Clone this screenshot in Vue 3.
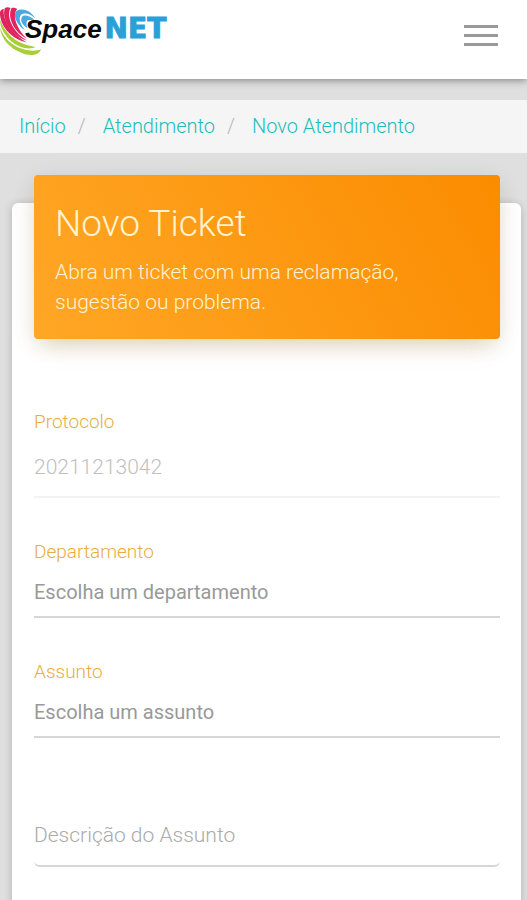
<template>
  <div class="page">
    <header class="navbar">
      <a href="#" class="logo" aria-label="SpaceNET">
        <svg class="swirl" viewBox="0 0 46 52" aria-hidden="true">
          <g fill="#a8cf38">
            <path d="M0 21C4 33 13 41 25 44C32 46 38 46 43 44C41 50 32 52 23 48C10 43 1 33 0 21Z" />
            <path d="M0 13C5 27 16 37 30 40C34 41 36 41 37 42C30 45 18 42 10 34C4 28 0 21 0 13Z" />
          </g>
          <g fill="#e0245e">
            <path d="M0 5C1 3 2 2 4 2C2 13 12 28 28 37C13 34 -1 20 0 5Z" />
            <path d="M5 1C7 0 9 0 11 1C6 11 14 26 28 35C14 31 1 15 5 1Z" />
            <path d="M12 1C14 0 17 1 18 2C12 9 18 23 28 33C16 27 7 12 12 1Z" />
          </g>
          <g fill="#4aa9de">
            <path d="M17 4C25 0 33 5 37 12C32 7 26 5 22 8C19 11 21 18 26 24C18 19 13 9 17 4Z" />
            <path d="M24 9C29 8 34 11 37 15C32 13 29 13 28 15C27 18 28 20 29 22C23 19 20 13 24 9Z" />
          </g>
        </svg>
        <span class="wordmark"><span class="space">Space</span><span class="net">NET</span></span>
      </a>
      <button type="button" class="menu" aria-label="Menu">
        <span></span>
        <span></span>
        <span></span>
      </button>
    </header>

    <nav class="breadcrumb" aria-label="Navegação">
      <ol>
        <li v-for="item in caminho" :key="item"><a href="#">{{ item }}</a></li>
      </ol>
    </nav>

    <main class="card">
      <div class="card-header">
        <h1>Novo Ticket</h1>
        <p>Abra um ticket com uma reclamação, sugestão ou problema.</p>
      </div>

      <form @submit.prevent>
        <div class="field">
          <label for="protocolo">Protocolo</label>
          <input id="protocolo" type="text" :value="protocolo" disabled />
        </div>

        <div class="field">
          <label for="departamento">Departamento</label>
          <select id="departamento" v-model="departamento">
            <option value="">Escolha um departamento</option>
          </select>
        </div>

        <div class="field">
          <label for="assunto">Assunto</label>
          <select id="assunto" v-model="assunto">
            <option value="">Escolha um assunto</option>
          </select>
        </div>

        <div class="field descricao">
          <textarea v-model="descricao" rows="1" placeholder="Descrição do Assunto" aria-label="Descrição do Assunto"></textarea>
        </div>
      </form>
    </main>
  </div>
</template>

<script setup>
import { ref } from 'vue'

const caminho = ['Início', 'Atendimento', 'Novo Atendimento']
const protocolo = '20211213042'

const departamento = ref('')
const assunto = ref('')
const descricao = ref('')
</script>

<style>
body { background: #dfdfdf; }
</style>

<style scoped>
* { box-sizing: border-box; }
.page { min-height: 100vh; font-family: Roboto, "Liberation Sans", sans-serif; font-weight: 300; overflow: hidden; }
a { text-decoration: none; }

.navbar { display: flex; justify-content: space-between; align-items: flex-start; height: 79px; padding-right: 28px; background: #fff; box-shadow: 0 1px 8px rgba(0,0,0,0.45); }
.logo { display: flex; align-items: flex-start; padding-top: 7px; }
.swirl { width: 44px; height: 50px; margin-right: -19px; }
.wordmark { display: flex; align-items: baseline; gap: 3px; padding-top: 6px; line-height: 32px; }
.space { position: relative; font-family: "Liberation Sans", Arial, sans-serif; font-size: 26px; font-weight: bold; font-style: italic; color: #080808; }
.net { font-family: "DejaVu Sans", Verdana, sans-serif; font-size: 28px; line-height: 28px; font-weight: bold; color: #2b9fd8; -webkit-text-stroke: 1px #2b9fd8; }
.menu { display: flex; flex-direction: column; gap: 6px; margin-top: 24px; padding: 1px; border: 0; background: none; cursor: pointer; }
.menu span { width: 34px; height: 3px; background: #999; }

.breadcrumb { margin-top: 21px; padding: 0 19px; background: #f5f5f5; }
.breadcrumb ol { display: flex; margin: 0; padding: 0; list-style: none; font-size: 20px; line-height: 53px; }
.breadcrumb li + li::before { content: "/"; padding: 0 17px 0 12px; color: #b5b5b5; }
.breadcrumb a { color: #1fbcbc; }

.card { margin: 50px 6px 0 12px; padding: 0 21px 34px 22px; min-height: 720px; border-radius: 6px; background: #fff; box-shadow: 0 1px 8px rgba(0,0,0,0.2); }
.card-header { position: relative; top: -28px; padding: 26px 21px 22px; border-radius: 4px; color: #fff3d0; background: linear-gradient(60deg, #ffa726, #fb8c00); box-shadow: 0 12px 22px -8px rgba(190,140,60,0.35), 0 4px 24px rgba(0,0,0,0.08); }
h1 { margin: 0 0 10px; font-size: 37px; line-height: 46px; font-weight: 300; }
.card-header p { margin: 0; font-size: 21px; line-height: 30px; }

form { display: flex; flex-direction: column; gap: 42px; padding-top: 43px; }
.field { display: flex; flex-direction: column; }
label { font-size: 19px; line-height: 24px; color: #e9ac40; }
input, select, textarea { width: 100%; margin: 0; padding: 0; border: 0; border-bottom: 2px solid #d6d6d6; border-radius: 0; outline: 0; background: none; font-family: inherit; font-size: 21px; font-weight: 300; appearance: none; }
input { height: 64px; padding-top: 4px; border-color: #f3f3f3; color: #c0c0c0; }
select { height: 54px; padding-top: 4px; font-size: 20px; font-weight: 400; color: #999; }
.descricao { padding-top: 30px; }
textarea { display: block; height: 57px; padding-top: 12px; border-radius: 6px; line-height: 26px; resize: none; color: #8c8c8c; }
textarea::placeholder { color: #aaa; opacity: 1; }
</style>
